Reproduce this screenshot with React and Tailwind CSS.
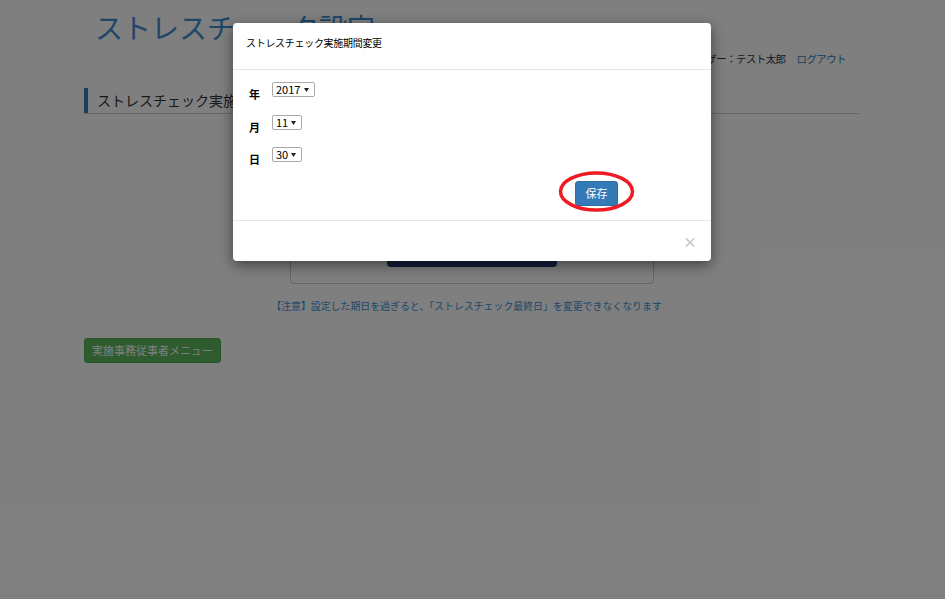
import React from "react";

const font = { fontFamily: '"Noto Sans CJK JP", "Noto Sans", sans-serif' };

function FakeSelect({ value, width }) {
  return (
    <div
      className={`flex h-[15px] items-center justify-between rounded-[2px] border border-[#a9a9a9] bg-white pl-[3px] pr-[5px] text-[11px] leading-none text-black ${width}`}
    >
      <span>{value}</span>
      <svg width="5" height="4" viewBox="0 0 5 4">
        <path d="M0 0h5L2.5 4z" fill="#222" />
      </svg>
    </div>
  );
}

function Row({ label, children, className }) {
  return (
    <div className={`flex h-[15px] items-start gap-[12px] ${className}`}>
      <span className="mt-[7px] w-[11px] text-[11px] font-bold leading-[11px] text-black">{label}</span>
      {children}
    </div>
  );
}

function Modal() {
  return (
    <div className="absolute left-[233px] top-[23px] w-[478px] rounded-[4px] bg-white shadow-[0_4px_14px_rgba(0,0,0,0.5)]">
      <div className="flex h-[47px] items-center border-b border-[#e5e5e5] px-[13px] pb-[8px] text-[10px] tracking-[-0.3px] text-black">
        ストレスチェック実施期間変更
      </div>
      <div className="flex flex-col px-[16px] pt-[12px]">
        <Row label="年">
          <FakeSelect value="2017" width="w-[43px]" />
        </Row>
        <Row label="月" className="mt-[18px]">
          <FakeSelect value="11" width="w-[30px]" />
        </Row>
        <Row label="日" className="mt-[17px]">
          <FakeSelect value="30" width="w-[30px]" />
        </Row>
        <div className="flex justify-end pr-[77px] pt-[17px] pb-[14px]">
          <div className="relative">
            <button className="h-[25px] w-[43px] rounded-[3px] border border-[#2e6da4] bg-[#337ab7] text-[11px] leading-none text-white">
              保存
            </button>
            <svg
              className="absolute left-[-17px] top-[-8px]"
              width="77"
              height="41"
              viewBox="0 0 77 41"
            >
              <ellipse cx="38.5" cy="20.5" rx="36" ry="18.5" fill="none" stroke="#ed1c24" strokeWidth="3.5" />
            </svg>
          </div>
        </div>
      </div>
      <div className="flex h-[41px] items-center justify-end border-t border-[#e5e5e5] pr-[14px]">
        <span className="text-[14px] font-bold leading-none text-[#c8c8c8]">×</span>
      </div>
    </div>
  );
}

export default function App() {
  return (
    <div className="relative h-[599px] w-full overflow-hidden bg-white" style={font}>
      <div className="ml-[84px] w-[775px]">
        <div className="flex items-start justify-between">
          <h1 className="ml-[11px] mt-[9px] text-[28px] leading-[36px] text-[#3e8ed3]">
            ストレスチェック設定
          </h1>
          <div className="mt-[51px] mr-[13px] flex gap-[11px] text-[10.5px] leading-[16px] tracking-[-0.6px]">
            <span className="text-[#333]">ユーザー：テスト太郎</span>
            <a className="text-[#337ab7]">ログアウト</a>
          </div>
        </div>
        <div className="mt-[21px] flex h-[26px] items-center border-b border-[#ccc]">
          <div className="flex h-[25px] items-center border-l-[4px] border-[#337ab7] pl-[9px] text-[14px] text-[#333]">
            ストレスチェック実施期間設定
          </div>
        </div>
        <div className="flex justify-center">
          <div className="mt-[18px] flex h-[152px] w-[364px] flex-col items-center justify-end rounded-[4px] border border-[#ccc] pb-[16px]">
            <div className="text-[13px] text-[#333]">2017年11月30日</div>
            <div className="mt-[20px] h-[32px] w-[170px] rounded-[4px] bg-[#1f3f6e]" />
          </div>
        </div>
        <p className="mt-[14px] pr-[10px] text-center text-[10px] tracking-[-0.1px] text-[#3e8ed3]">
          【注意】設定した期日を過ぎると、「ストレスチェック最終日」を変更できなくなります
        </p>
        <button className="mt-[25px] h-[25px] w-[137px] rounded-[3px] border border-[#4cae4c] bg-[#5cb85c] text-[11px] text-white">
          実施事務従事者メニュー
        </button>
      </div>
      <div className="absolute inset-0 bg-black/50" />
      <Modal />
    </div>
  );
}
